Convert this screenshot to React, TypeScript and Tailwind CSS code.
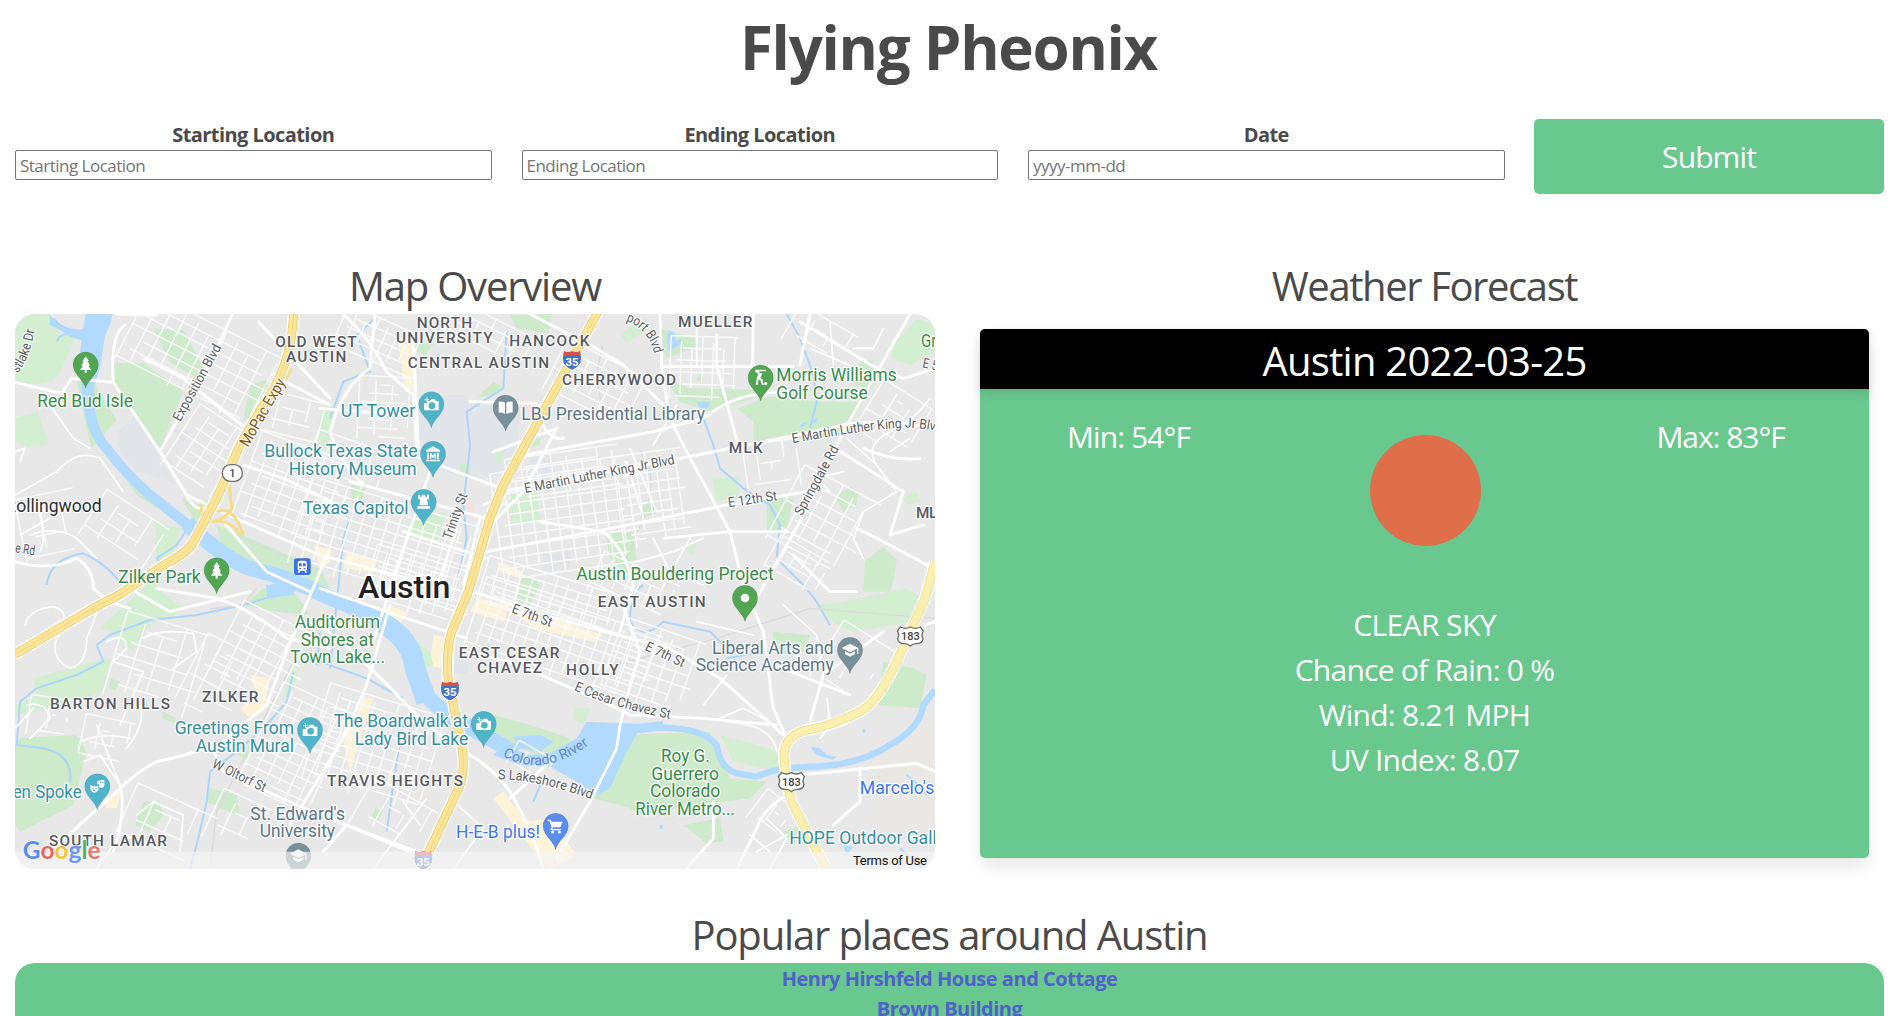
import React from "react";

/* ---------- Map data (map units: 3 per CSS pixel) ---------- */

type District = [x: number, y: number, w: number, h: number, rot: number, sx: number, sy: number];

const districts: District[] = [
  [570, 165, 460, 230, 27, 44, 36],
  [590, 440, 190, 220, 33, 44, 34],
  [850, 560, 300, 280, 20, 38, 32],
  [850, 340, 200, 130, 14, 46, 40],
  [1120, 720, 520, 270, 17, 36, 31],
  [1230, 850, 320, 180, 17, 36, 31],
  [1130, 310, 170, 190, 3, 50, 26],
  [1110, 110, 260, 130, 24, 34, 32],
  [1440, 90, 260, 100, 27, 42, 30],
  [1760, 240, 280, 170, 27, 44, 32],
  [1680, 640, 440, 330, -8, 37, 32],
  [1660, 500, 340, 120, -8, 46, 30],
  [1930, 570, 200, 260, -8, 30, 30],
  [2080, 190, 200, 190, 2, 32, 36],
  [2290, 480, 170, 140, -8, 40, 60],
  [2440, 650, 260, 250, 28, 44, 40],
  [2430, 100, 200, 120, 30, 60, 44],
  [2650, 340, 170, 170, 32, 56, 34],
  [2360, 780, 170, 110, 30, 34, 34],
  [1660, 1010, 560, 220, 19, 34, 34],
  [1620, 880, 420, 140, 17, 36, 28],
  [1870, 850, 250, 130, 25, 34, 34],
  [1930, 1080, 260, 220, 19, 40, 36],
  [1090, 1330, 360, 300, 17, 36, 34],
  [860, 1330, 240, 330, 25, 38, 30],
  [760, 1060, 260, 260, 27, 44, 34],
  [620, 1120, 170, 220, 27, 52, 44],
  [440, 1080, 260, 260, 17, 62, 44],
  [340, 680, 220, 160, 33, 54, 42],
  [120, 660, 180, 190, -12, 66, 60],
  [140, 1240, 170, 120, 8, 58, 52],
  [290, 1300, 150, 120, 12, 46, 40],
  [470, 1560, 260, 160, 24, 66, 52],
  [1150, 1540, 220, 160, 30, 66, 56],
  [1560, 1370, 120, 80, 30, 40, 34],
  [2300, 1540, 150, 110, 38, 50, 44],
  [2530, 1080, 190, 200, 32, 80, 90],
  [690, 1560, 180, 160, 25, 50, 54],
  [1010, 470, 220, 130, 19, 44, 38],
];

const greens = [
  "15,27 120,27 150,90 200,90 150,200 130,225 70,240 15,225",
  "305,175 400,175 480,230 520,260 450,430 370,330 305,230",
  "200,225 250,230 320,345 245,430 220,330",
  "15,340 85,320 115,420 60,425 15,410",
  "430,70 520,75 580,190 560,220 480,170",
  "720,240 770,225 780,280 700,350",
  "945,300 965,300 965,460 920,400",
  "515,580 560,600 640,560 610,640 560,660",
  "350,530 400,560 480,610 440,610 380,570",
  "435,655 510,670 490,760 410,840 270,970 320,980 480,940 520,910 440,850",
  "620,660 720,700 930,790 960,850 900,845 760,800 640,740",
  "700,900 760,850 860,870 900,930 800,920",
  "70,1120 250,1070 300,1060 280,1160 140,1210 15,1230 15,1200 80,1170",
  "300,1120 330,1130 315,1155 295,1150",
  "30,1300 200,1290 230,1340 190,1500 30,1580 15,1560 15,1320",
  "300,980 410,920 480,910 400,980 370,1040",
  "400,1490 450,1490 460,1530 420,1580 375,1560",
  "600,1450 680,1470 690,1535 590,1490",
  "835,1110 870,1090 850,1150 815,1190",
  "460,1220 500,1240 490,1255 455,1240",
  "675,1345 720,1340 710,1365",
  "1210,635 1310,620 1280,715 1195,690",
  "1500,30 1625,27 1615,85 1520,70",
  "1405,275 1450,230 1480,250 1430,275",
  "1495,570 1580,560 1590,645 1505,655",
  "1215,120 1270,110 1250,150 1220,140",
  "1020,540 1070,545 1050,590 1025,575",
  "1455,440 1480,440 1475,475 1452,470",
  "1350,480 1385,475 1375,510 1350,512",
  "1565,370 1590,400 1590,420 1550,430",
  "935,310 960,320 955,400 930,420 925,370",
  "1785,675 1870,690 1860,810 1800,760",
  "1950,70 2055,100 2060,125 1970,160 1960,140",
  "1830,90 1880,50 1900,80 1850,115",
  "1965,220 2040,250 2240,255 2230,280 2100,320 2010,290",
  "2180,310 2280,275 2440,290 2560,290 2500,390 2230,415 2230,350",
  "2650,120 2720,40 2775,60 2775,140 2700,180 2645,160",
  "2550,170 2590,165 2590,250 2530,240",
  "2060,225 2075,200 2075,230",
  "2105,520 2190,515 2185,570 2120,590",
  "2270,580 2350,580 2330,680 2270,675",
  "2475,575 2520,545 2545,560 2540,600 2500,620",
  "2675,580 2720,560 2730,590 2690,600",
  "2565,770 2620,725 2660,765 2650,830 2640,860 2560,860",
  "1900,600 1935,585 1940,625 1890,640",
  "2020,720 2065,710 2045,750",
  "1540,800 1590,840 1550,920 1520,900 1525,850",
  "1830,690 1870,680 1880,770 1830,760",
  "2480,960 2420,900 2500,890 2690,850 2760,900 2700,950 2530,980",
  "2620,1070 2710,1090 2750,1110 2730,1210 2600,1200",
  "1450,1230 1560,1260 1680,1300 1660,1340 1580,1350 1500,1320 1430,1290",
  "1200,990 1260,1040 1270,1080 1230,1100",
  "1280,1170 1380,1250 1340,1230",
  "1830,1290 2100,1280 2130,1370 2160,1420 2270,1430 2220,1480 2050,1500 1890,1530 1860,1510 1750,1480 1820,1400",
  "2130,1290 2310,1340 2310,1400 2170,1370",
  "2020,1560 2130,1540 2140,1610 2090,1615",
  "2320,1580 2370,1560 2350,1620",
  "1690,1210 1740,1210 1720,1260 1690,1240",
  "1095,1510 1120,1515 1105,1550 1085,1540",
  "2290,980 2400,990 2380,1040 2330,1050 2290,1010",
];

const blocks = [
  "1230,270 1360,270 1400,340 1400,520 1300,500 1225,400",
  "1400,300 1530,310 1520,480 1430,520 1390,490",
  "1560,450 1620,440 1640,510 1570,545",
  "320,380 375,335 500,540 450,520 380,500 330,440",
  "1600,745 1680,740 1680,790 1600,800",
  "485,370 540,380 520,410",
  "600,690 700,680 710,740 660,750",
  "1340,1050 1380,1070 1370,1110 1330,1100",
];

const sand = [
  "1165,110 1210,100 1215,270 1185,260",
  "1010,740 1100,770 1080,800 1000,790",
  "1400,880 1500,900 1480,950 1380,920",
  "1270,990 1320,1000 1290,1090 1260,1080",
  "1510,920 1660,950 1780,990 1750,1010 1570,970",
  "720,1110 780,1120 760,1220 720,1240 690,1210 740,1170",
  "280,1480 335,1450 320,1510 290,1510",
  "1000,1310 1060,1180 1090,1180 1020,1400",
  "1450,1480 1480,1460 1570,1580 1600,1630 1640,1640 1620,1692 1580,1650",
  "1550,1550 1620,1540 1700,1650 1620,1692 1580,1640",
  "1130,900 1190,920 1160,980 1120,950",
  "910,720 965,735 960,770 930,790",
  "1465,770 1540,800 1530,820 1470,800",
];

const midRoads = [
  "M15 232 L155 265 L185 220 L310 232 L450 440 L530 570 L700 650 L930 750 L1230 830",
  "M320 27 L440 30 M345 60 Q300 90 310 232",
  "M668 27 L610 150 L450 440",
  "M400 160 L520 220 L710 370 M540 240 L720 380",
  "M745 50 L960 280 M790 210 L960 300",
  "M15 770 Q120 800 200 760 Q250 790 250 850 Q300 900 360 910",
  "M340 840 L480 920 L560 900 L720 860 M440 850 L620 880 Q720 910 830 1000 L960 1030",
  "M640 650 L700 720 L770 800 L900 860",
  "M530 570 Q560 640 620 590",
  "M955 740 L830 1040 L770 1200 L640 1310 Q560 1345 440 1370 Q380 1400 320 1460 L120 1640",
  "M330 1440 Q350 1520 310 1640",
  "M600 1320 L640 1400 L860 1500 L960 1540 L1200 1640",
  "M965 590 L820 520 L700 480",
  "M930 310 L1180 330 M1000 27 Q1080 100 1130 200 L1210 270 L1220 430",
  "M1095 27 L1080 190 Q1000 240 960 380 Q990 470 1060 540",
  "M1210 110 L1225 430 M1180 440 L1500 560 L1420 600 M1380 290 L1580 295 Q1600 410 1660 400",
  "M1020 530 L1430 640 M1180 680 L1430 760 M1260 500 L1160 790 L1090 1010",
  "M1410 640 L1360 840 M1350 640 L1280 850",
  "M1450 440 L1640 370 L1540 560 L1420 680",
  "M1545 450 L1930 380 L2080 340 Q2170 270 2270 265 L2360 255",
  "M1500 555 L2010 460 L2360 390 L2500 360 Q2600 340 2775 370",
  "M1430 740 L1830 665 L2150 600 L2390 560",
  "M1560 27 L1740 120 L1840 180 L1960 300 L2030 440 L2160 680 L2200 840 L2260 980 L2290 1210 L2330 1300",
  "M1950 30 L1955 190 L1980 350",
  "M2120 90 L2120 180 L2160 330 L2190 440",
  "M2700 27 L2500 380 L2370 650 L2240 880 M1960 185 L2350 185 M2230 27 L2228 185",
  "M2370 50 L2600 190 L2680 220 L2775 190 M2400 27 L2370 180",
  "M1780 680 Q1850 740 1870 840 L1830 980 M1590 650 L1780 680",
  "M1390 860 L1600 930 L1860 1000 L1960 1020 L2130 1120 L2320 1290",
  "M1360 1040 L1500 1070 L1800 1200 L1860 1230 L2080 1240 L2300 1260",
  "M1830 880 L1890 1040 L1850 1180 L1830 1260 L1820 1330 L1740 1490 L1640 1660",
  "M930 850 L1130 920 L1370 1000",
  "M930 960 Q1050 1050 1190 1200 Q1290 1300 1380 1350 Q1450 1390 1500 1460 L1560 1570 L1600 1692",
  "M1140 900 L1070 1140 L1000 1300 L840 1560",
  "M940 1640 L1010 1560 L1140 1610 L1250 1650",
  "M2370 1410 L2720 1375 L2775 1400 M2550 1390 L2550 1490 L2470 1560",
  "M2330 1470 Q2260 1510 2240 1570 L2180 1692 M2110 1490 L2110 1600 L2030 1690",
  "M1500 1480 L1620 1370 M2780 950 L2740 960",
  "M2330 680 L2160 680 L1960 700 M2560 430 Q2650 470 2730 460",
  "M2460 420 L2680 560 L2640 690 L2740 660",
  "M2350 750 L2460 860 L2540 860 M2540 670 L2600 700 L2770 790",
  "M2290 1080 L2520 1170 M2400 1250 L2440 1110 L2620 980",
];

const thinRoads = [
  "M15 440 L45 430 L30 470 M120 300 L190 400 L240 430 M15 570 L140 500 Q200 430 270 460 L340 560",
  "M60 690 Q140 660 200 700 L260 760 M90 620 Q110 700 90 740 M30 690 L120 640",
  "M45 960 Q60 910 130 905 Q190 920 140 1000 Q120 1060 180 1090 Q230 1080 230 1000 Q250 960 260 920",
  "M290 1010 Q350 980 350 1030 L310 1070 L400 1100 L330 1260 M400 1000 Q440 970 550 985 L560 1040 L490 1090",
  "M50 1200 Q110 1190 120 1240 L60 1300 M15 1270 L70 1210 M220 1370 L270 1350 L330 1440",
  "M260 1260 L330 1440 M210 1310 Q280 1280 360 1300 M380 1180 Q420 1240 350 1330",
  "M380 1530 L430 1490 L520 1530 L510 1640 M260 1692 L330 1590 L440 1620",
  "M1320 1480 L1420 1570 L1330 1692 M1180 1490 L1230 1560 M1250 1480 L1090 1692",
  "M2060 27 L2060 180 M2400 130 L2540 190 M2460 50 L2470 180 M2530 130 L2590 130 L2620 70",
  "M2510 400 L2600 480 L2660 560 L2560 620 L2530 700 L2560 760 M2500 500 L2420 520 L2460 560",
  "M2600 480 Q2560 420 2640 380 Q2720 340 2760 280 M2700 400 L2640 440",
  "M2060 950 L2230 990 M2320 900 L2420 990 L2440 1110 M2450 1180 Q2470 1260 2430 1300",
  "M2270 1540 L2330 1600 L2280 1692 M2240 1640 L2330 1590 M2220 1590 L2280 1640",
  "M2130 1240 L2200 1210 L2280 1250 M2080 1200 L2150 1110 M2150 1250 Q2290 1260 2300 1340",
  "M1850 470 L1900 640 M1860 430 L1940 620 M2000 300 L1930 420",
  "M1930 700 L1980 800 L2080 840 M1880 770 L1990 740 L2080 700 M1960 840 L2040 700",
];

const streams = [
  "M130 40 Q150 70 190 75 L240 80 M140 110 Q150 80 190 90",
  "M540 660 L500 720 L440 760 L470 790",
  "M110 840 Q120 760 220 745 Q300 780 350 860",
  "M900 840 L700 900 L560 930 L420 945 L300 990 L260 1020 L280 1070 L200 1110 L80 1150 L30 1190 L20 1320 L100 1330 Q190 1350 180 1430",
  "M1095 40 L1040 90 L1080 200 L1000 230 L960 340",
  "M1490 80 L1480 250 L1370 320 L1380 420 L1360 600 L1370 700 L1340 840",
  "M2330 27 L2370 100 L2410 210 L2420 290 L2400 370",
  "M2080 340 L2110 420 L2130 490 L2200 550 L2280 600 L2310 660 L2300 760 L2380 840 L2420 890 L2460 960",
  "M960 1090 L1000 700 L1020 640",
  "M850 1100 L830 1190 L770 1260 L680 1340 L600 1400 L590 1490 L560 1620 L540 1692",
  "M930 980 L920 1080 M1130 1580 L1160 1370 L1180 1260 M930 1070 L1070 1120 L1180 1180",
  "M1900 840 Q1860 860 1860 950 Q1900 1010 1960 950 L2100 980 L2160 1040",
  "M2150 1060 L2320 1030 M1600 1420 L1570 1490",
  "M2690 1410 Q2730 1440 2750 1470 M2670 1630 L2740 1692",
];

type MapText = [x: number, y: number, w: number, text: string];

const placeLabels: { color: string; items: MapText[] }[] = [
  {
    color: "#378d48",
    items: [
      [82, 307, 287, "Red Bud Isle"],
      [325, 834, 247, "Zilker Park"],
      [2733, 125, 46, "Gr"],
      [2299, 229, 361, "Morris Williams"],
      [2299, 281, 274, "Golf Course"],
      [1699, 826, 592, "Austin Bouldering Project"],
      [854, 970, 256, "Auditorium"],
      [872, 1022, 220, "Shores at"],
      [841, 1075, 284, "Town Lake..."],
      [1953, 1372, 146, "Roy G."],
      [1924, 1424, 203, "Guerrero"],
      [1920, 1476, 211, "Colorado"],
      [1876, 1529, 299, "River Metro..."],
    ],
  },
  {
    color: "#34909f",
    items: [
      [992, 335, 224, "UT Tower"],
      [763, 457, 460, "Bullock Texas State"],
      [836, 510, 384, "History Museum"],
      [878, 627, 318, "Texas Capitol"],
      [494, 1287, 358, "Greetings From"],
      [557, 1340, 295, "Austin Mural"],
      [8, 1480, 207, "en Spoke"],
      [971, 1267, 403, "The Boardwalk at"],
      [1034, 1319, 341, "Lady Bird Lake"],
      [2338, 1618, 442, "HOPE Outdoor Gall"],
    ],
  },
  {
    color: "#5b7686",
    items: [
      [1534, 345, 551, "LBJ Presidential Library"],
      [2106, 1046, 365, "Liberal Arts and"],
      [2057, 1098, 414, "Science Academy"],
      [721, 1545, 284, "St. Edward's"],
      [749, 1597, 226, "University"],
    ],
  },
  {
    color: "#4079f2",
    items: [
      [1338, 1599, 252, "H-E-B plus!"],
      [2549, 1468, 224, "Marcelo's"],
    ],
  },
  { color: "#2b2f33", items: [[-14, 620, 289, "Rollingwood"]] },
];

const areaLabels: MapText[] = [
  [796, 125, 244, "OLD WEST"],
  [828, 170, 181, "AUSTIN"],
  [1220, 68, 166, "NORTH"],
  [1158, 113, 290, "UNIVERSITY"],
  [1498, 122, 240, "HANCOCK"],
  [1193, 188, 424, "CENTRAL AUSTIN"],
  [1656, 241, 342, "CHERRYWOOD"],
  [2004, 67, 223, "MUELLER"],
  [2156, 444, 102, "MLK"],
  [2718, 640, 64, "ML"],
  [1346, 1060, 302, "EAST CESAR"],
  [1401, 1104, 195, "CHAVEZ"],
  [1668, 1111, 158, "HOLLY"],
  [1763, 907, 324, "EAST AUSTIN"],
  [576, 1190, 169, "ZILKER"],
  [120, 1213, 360, "BARTON HILLS"],
  [951, 1443, 408, "TRAVIS HEIGHTS"],
  [117, 1622, 354, "SOUTH LAMAR"],
];

const roadLabels: { d: string; w: number; text: string; color?: string }[] = [
  { d: "M511 352 L658 85", w: 257, text: "Exposition Blvd" },
  { d: "M714 428 L856 182", w: 227, text: "MoPac Expy", color: "#7c551b" },
  { d: "M22 205 Q70 150 80 20", w: 142, text: "stlake Dr" },
  { d: "M14 742 L110 756", w: 60, text: "e Rd" },
  { d: "M1324 706 L1398 500", w: 145, text: "Trinity St" },
  { d: "M1546 564 L2050 466", w: 458, text: "E Martin Luther King Jr Blvd" },
  { d: "M2348 415 Q2560 374 2680 368 Q2740 366 2830 390", w: 452, text: "E Martin Luther King Jr Blvd" },
  { d: "M2156 607 L2350 578", w: 148, text: "E 12th St" },
  { d: "M2376 634 L2514 382", w: 232, text: "Springdale Rd" },
  { d: "M1848 48 Q1930 74 1940 190", w: 136, text: "port Blvd" },
  { d: "M2736 187 L2800 200", w: 46, text: "E 5" },
  { d: "M1503 922 L1680 988", w: 126, text: "E 7th St" },
  { d: "M1903 1034 L2078 1116", w: 126, text: "E 7th St" },
  { d: "M1691 1155 Q1850 1225 2060 1254", w: 302, text: "E Cesar Chavez St" },
  { d: "M1464 1423 Q1590 1420 1800 1504", w: 288, text: "S Lakeshore Blvd" },
  { d: "M604 1386 L840 1500", w: 174, text: "W Oltorf St" },
];

/* ---------- Map pieces ---------- */

function DistrictGrid({ d }: { d: District }) {
  const [x, y, w, h, rot, sx, sy] = d;
  const parts: string[] = [];
  const cols = Math.floor(w / sx);
  const rows = Math.floor(h / sy);
  for (let i = 0; i <= cols; i++) {
    const a = ((i * 7) % 3) * sy * 0.5;
    const b = ((i * 5) % 4) * sy * 0.5;
    parts.push(`M${-w / 2 + i * sx} ${-h / 2 + a}V${h / 2 - b}`);
  }
  for (let j = 0; j <= rows; j++) {
    const a = ((j * 5) % 3) * sx * 0.6;
    const b = ((j * 7) % 4) * sx * 0.5;
    parts.push(`M${-w / 2 + a} ${-h / 2 + j * sy}H${w / 2 - b}`);
  }
  return <path transform={`translate(${x} ${y}) rotate(${rot})`} d={parts.join("")} />;
}

function Highway({ d, light }: { d: string; light?: boolean }) {
  return (
    <g fill="none" strokeLinejoin="round">
      <path d={d} stroke="#fff" strokeWidth="36" />
      <path d={d} stroke={light ? "#f3dc8b" : "#edca6c"} strokeWidth="27" />
      <path d={d} stroke={light ? "#fcf0b0" : "#fae59a"} strokeWidth="22" />
      {!light && <path d={d} stroke="#f3d67f" strokeWidth="3" />}
    </g>
  );
}

function Pin({ x, y, color, children }: { x: number; y: number; color: string; children: React.ReactNode }) {
  return (
    <g transform={`translate(${x} ${y})`}>
      <path
        d="M0 0 C-7 -28 -38 -42 -38 -71 A38 38 0 1 1 38 -71 C38 -42 7 -28 0 0Z"
        fill={color}
        stroke="#000"
        strokeOpacity=".12"
        strokeWidth="2"
      />
      <g transform="translate(0 -71)" fill="#fff">
        {children}
      </g>
    </g>
  );
}

const Tree = () => <path d="M0 -25 L10 -10 H6 L13 3 H8 L17 16 H3 V25 H-3 V16 H-17 L-8 3 H-13 L-6 -10 H-10Z" />;
const Camera = ({ color }: { color: string }) => (
  <g>
    <path d="M-22 -3 H-12 V-10 H-5 L0 -16 H10 L14 -10 H22 V18 H-22Z" />
    <path d="M-20 -15 H-15 V-20 H-12 V-15 H-7 V-12 H-12 V-7 H-15 V-12 H-20Z" />
    <circle cx="2" cy="4" r="10" fill={color} />
  </g>
);
const GradCap = () => (
  <g>
    <path d="M0 -19 L25 -6 L0 7 L-25 -6Z" />
    <path d="M-15 3 L0 11 L15 3 V12 L0 20 L-15 12Z" />
    <path d="M21 -6 H25 V12 H21Z" />
  </g>
);

function Interstate({ x, y }: { x: number; y: number }) {
  return (
    <g transform={`translate(${x} ${y})`}>
      <path d="M-24 -28 Q-12 -22 0 -28 Q12 -22 24 -28 Q32 -10 27 4 Q20 20 0 28 Q-20 20 -27 4 Q-32 -10 -24 -28Z" fill="#4573c4" stroke="#fff" strokeWidth="3" />
      <path d="M-24 -30 Q-12 -24 0 -30 Q12 -24 24 -30 L27 -17 H-27Z" fill="#d6504c" />
      <text y="14" textAnchor="middle" fontSize="34" fontWeight="700" fill="#fff">35</text>
    </g>
  );
}

function UsRoute({ x, y }: { x: number; y: number }) {
  return (
    <g transform={`translate(${x} ${y})`}>
      <path d="M-30 -28 Q-15 -20 0 -28 Q15 -20 30 -28 L39 -16 Q32 -4 38 8 Q36 22 18 22 Q6 22 0 29 Q-6 22 -18 22 Q-36 22 -38 8 Q-32 -4 -39 -16Z" fill="#fff" stroke="#6a6a6a" strokeWidth="4" />
      <text y="12" textAnchor="middle" fontSize="33" fontWeight="500" fill="#444">183</text>
    </g>
  );
}

function AustinMap() {
  const teal = "#4fb3ca";
  const green = "#52a552";
  const slate = "#78909c";
  return (
    <svg viewBox="15 27 2760 1665" className="block h-[555px] w-full rounded-[20px] font-['Roboto',sans-serif]" role="img" aria-label="Map of Austin">
      <rect x="15" y="27" width="2760" height="1665" fill="#e8e8e8" />
      <path d="M2600 1340 L2775 1250 V1600 L2600 1560Z" fill="#eae8e4" />
      {blocks.map((p) => <polygon key={p} points={p} fill="#e1e5e9" />)}
      {sand.map((p) => <polygon key={p} points={p} fill="#fdf3d8" />)}
      {greens.map((p, i) => <polygon key={p} points={p} fill={i % 3 ? "#cdeacb" : "#d3eed0"} />)}
      <polygon points="1530,280 1600,305 1580,330 1538,320" fill="#f8dfdf" />
      <polygon points="1375,590 1392,595 1385,635 1370,630" fill="#f8dfdf" />

      <g fill="none" stroke="#acd5fb" strokeWidth="6" strokeLinejoin="round">
        {streams.map((d) => <path key={d} d={d} />)}
      </g>
      <g fill="#b2daff">
        <path d="M228 27 H308 L300 60 L285 90 L272 180 L252 245 L255 320 L225 330 L215 250 L210 150 L215 90Z" />
        <path d="M120 30 L150 65 L205 80 L230 65 V110 L180 95 L150 75 L120 60Z" />
        <path d="M1975 75 L1995 85 L1995 110 L2015 100 L2010 120 L1975 138 L1972 100Z" />
        <path d="M2060 290 L2100 290 L2095 310 L2070 310Z M2370 360 L2395 348 L2385 362 L2372 368Z M2400 350 L2425 335 L2420 352Z" />
        <path d="M1510 1295 L1590 1290 L1630 1310 L1590 1340 L1530 1330Z" />
        <path d="M1480 1320 L1560 1350 L1620 1345 L1700 1300 L1730 1250 L1890 1270 L1850 1340 L1800 1450 L1760 1470 L1700 1430 L1620 1385 L1530 1380 L1450 1350Z" />
        <path d="M2400 1325 L2430 1330 L2450 1350 L2480 1355 L2470 1365 L2420 1350Z M2558 1273 h8 v10 h-8Z M1950 1560 h8 v12 h-8Z" />
        <path d="M2500 1620 L2530 1625 L2510 1650Z" />
      </g>
      <g fill="none" stroke="#b2daff" strokeLinejoin="round">
        <path d="M238 310 Q250 390 290 430 Q350 510 420 570 L540 665" strokeWidth="31" />
        <path d="M530 655 Q640 760 720 790 Q850 820 940 870 Q1060 920 1140 960 Q1200 1000 1212 1100 Q1235 1180 1330 1240 L1430 1295 L1520 1345" strokeWidth="46" />
        <path d="M1110 950 Q1205 1000 1215 1090 L1250 1190" strokeWidth="62" />
        <path d="M770 860 L850 850" strokeWidth="40" />
        <path d="M1830 1272 L1960 1268 Q2080 1270 2120 1320 Q2130 1390 2180 1405 L2240 1415 Q2290 1390 2390 1386 Q2540 1385 2640 1320 Q2730 1270 2740 1200 L2775 1155" strokeWidth="19" />
        <path d="M1740 1265 L1890 1270 L1960 1262" strokeWidth="28" />
      </g>

      <g fill="none" stroke="#dadada" strokeWidth="4">
        <path d="M1890 440 Q1950 500 1900 640 L1840 780 M1780 120 Q1740 240 1790 320" />
        <path d="M860 1050 L620 1520 L600 1692 M600 912 L700 900 L740 850 M1810 1080 L2120 1000 L2400 910 L2775 940" />
        <path d="M660 680 Q780 740 940 800" />
      </g>
      <g fill="none" stroke="#f9f9f9" strokeWidth="4.5">
        {districts.map((d, i) => <DistrictGrid key={i} d={d} />)}
      </g>
      <g fill="none" stroke="#fff" strokeWidth="5" strokeLinejoin="round" strokeLinecap="round">
        {thinRoads.map((d) => <path key={d} d={d} />)}
      </g>
      <g fill="none" stroke="#fff" strokeWidth="8.5" strokeLinejoin="round" strokeLinecap="round">
        {midRoads.map((d) => <path key={d} d={d} />)}
      </g>

      <g fill="none" stroke="#f6dc8a" strokeWidth="9">
        <path d="M600 650 Q660 640 690 690 M620 620 Q670 600 700 690 M655 520 L665 610 M575 600 L570 650 M590 650 Q650 650 670 600" />
        <path d="M845 190 L825 225 M790 235 L780 270" />
      </g>
      <Highway d="M2775 770 L2745 880 L2660 1070 Q2600 1200 2540 1225 Q2460 1265 2390 1275 Q2325 1290 2322 1350 L2328 1430 L2345 1490 L2400 1600 L2450 1692" light />
      <Highway d="M852 20 L845 90 Q830 200 760 300 L690 420 L620 580 L545 720 Q520 750 470 775 L330 868 L240 915 L15 1048" />
      <Highway d="M1764 20 L1480 540 L1440 640 L1375 860 L1325 980 Q1308 1030 1314 1120 L1358 1340 Q1364 1400 1350 1440 L1245 1665" />

      <g transform="translate(667 504)">
        <rect x="-30" y="-25" width="60" height="50" rx="24" fill="#fff" stroke="#707070" strokeWidth="4" />
        <text y="12" textAnchor="middle" fontSize="33" fontWeight="500" fill="#444">1</text>
      </g>
      <Interstate x={1686} y={168} />
      <Interstate x={1320} y={1160} />
      <Interstate x={1240} y={1668} />
      <UsRoute x={2701} y={994} />
      <UsRoute x={2344} y={1431} />
      <g transform="translate(877 785)">
        <rect x="-25" y="-25" width="50" height="50" rx="8" fill="#3b71e3" />
        <path d="M-14 -10 Q-14 -18 -6 -18 H6 Q14 -18 14 -10 V8 Q14 11 10 11 L15 18 H9 L6 13 H-6 L-9 18 H-15 L-10 11 Q-14 11 -14 8Z" fill="#fff" />
        <path d="M-10 -10 H-2 V-1 H-10Z M2 -10 H10 V-1 H2Z M-9 4 h5 v4 h-5Z M4 4 h5 v4 h-5Z" fill="#3b71e3" />
      </g>

      <g fontSize="38" fontWeight="400" stroke="#fff" strokeOpacity=".85" strokeWidth="7" strokeLinejoin="round" style={{ paintOrder: "stroke" }}>
        {roadLabels.map((r, i) => (
          <g key={i} fill={r.color ?? "#5c6064"}>
            <path id={`road-${i}`} d={r.d} fill="none" stroke="none" />
            <text fontSize={r.color ? 46 : 41}>
              <textPath href={`#road-${i}`} textLength={r.w} lengthAdjust="spacingAndGlyphs">{r.text}</textPath>
            </text>
          </g>
        ))}
      </g>
      <path id="river-label" d="M1478 1352 Q1600 1424 1745 1312" fill="none" />
      <text fontSize="42" fill="#6089cd">
        <textPath href="#river-label" textLength="278">Colorado River</textPath>
      </text>

      <g fontSize="46" fontWeight="500" fill="#56595e" stroke="#fff" strokeOpacity=".9" strokeWidth="7" strokeLinejoin="round" style={{ paintOrder: "stroke" }}>
        {areaLabels.map(([x, y, w, t]) => (
          <text key={t + x} x={x} y={y} textLength={w}>{t}</text>
        ))}
      </g>
      {placeLabels.map((g) => (
        <g key={g.color} fontSize="54" fill={g.color} stroke="#fff" strokeOpacity=".95" strokeWidth="8" strokeLinejoin="round" style={{ paintOrder: "stroke" }}>
          {g.items.map(([x, y, w, t]) => (
            <text key={t} x={x} y={y} textLength={w} lengthAdjust="spacingAndGlyphs">{t}</text>
          ))}
        </g>
      ))}
      <text x="1044" y="880" textLength="277" lengthAdjust="spacingAndGlyphs" fontSize="96" fontWeight="500" fill="#1f2124" stroke="#fff" strokeWidth="10" style={{ paintOrder: "stroke" }}>Austin</text>

      <Pin x={227} y={250} color={green}><Tree /></Pin>
      <Pin x={620} y={867} color={green}><Tree /></Pin>
      <Pin x={2252} y={289} color={green}>
        <path d="M-16 -24 H16 V-19 H-4 V-15 L5 -12 L-1 0 L6 6 L9 22 H4 L0 10 L-6 5 L-9 22 H-15 L-11 -1 L-7 -12 L-16 -17Z" />
        <circle cx="15" cy="18" r="5" />
      </Pin>
      <Pin x={2205} y={950} color={green}><circle r="13" /></Pin>
      <Pin x={1264} y={369} color={teal}><Camera color={teal} /></Pin>
      <Pin x={1269} y={518} color={teal}>
        <path d="M0 -23 L21 -11 V-7 H-21 V-11Z M-18 -4 H-12 V15 H-18Z M12 -4 H18 V15 H12Z M-21 17 H21 V22 H-21Z" />
        <path d="M-9 14 V-2 H-5 L0 6 L5 -2 H9 V14 H5 V6 L0 13 L-5 6 V14Z" />
      </Pin>
      <Pin x={1241} y={662} color={teal}>
        <path d="M-16 -22 H-10 V-16 H-4 V-22 H4 V-16 H10 V-22 H16 V-8 H10 L13 10 H-13 L-10 -8 H-16Z M-19 13 H19 V20 H-19Z" />
      </Pin>
      <Pin x={900} y={1346} color={teal}><Camera color={teal} /></Pin>
      <Pin x={1421} y={1328} color={teal}><Camera color={teal} /></Pin>
      <Pin x={262} y={1515} color={teal}>
        <path d="M0 -16 L21 -20 V-2 Q16 8 6 4 V-6 H0Z" />
        <path d="M-21 -4 Q-9 2 3 -2 V10 Q-3 20 -10 19 Q-20 16 -21 6Z" />
        <path d="M-15 4 h5 v3 h-5Z M-6 4 h5 v3 h-5Z M7 -12 h4 v3 h-4Z M14 -13 h4 v3 h-4Z M-13 11 h8 v3 h-8Z" fill={teal} />
      </Pin>
      <Pin x={1487} y={379} color={slate}>
        <path d="M-2 -15 Q-10 -20 -21 -18 V15 Q-10 14 -2 19Z M2 -15 Q10 -20 21 -18 V15 Q10 14 2 19Z" />
      </Pin>
      <Pin x={2520} y={1106} color={slate}><GradCap /></Pin>
      <Pin x={865} y={1723} color={slate}><GradCap /></Pin>
      <Pin x={1637} y={1634} color="#5b8def">
        <path d="M-24 -19 H-15 L-12 -13 H21 L14 4 H-8 L-10 9 H15 V13 H-16 L-12 3 L-19 -15 H-24Z" />
        <circle cx="-9" cy="18" r="4.5" />
        <circle cx="11" cy="18" r="4.5" />
      </Pin>

      <rect x="15" y="1640" width="2760" height="52" fill="#f5f5f5" fillOpacity=".68" />
      <text x="38" y="1662" textLength="234" lengthAdjust="spacingAndGlyphs" fontSize="76" fontWeight="700" fontFamily="Lato, sans-serif" stroke="#fff" strokeOpacity=".8" strokeWidth="5" style={{ paintOrder: "stroke" }}>
        <tspan fill="#5c8df2">G</tspan>
        <tspan fill="#e8685d">o</tspan>
        <tspan fill="#f5c534">o</tspan>
        <tspan fill="#6b97f5">g</tspan>
        <tspan fill="#53b06a">l</tspan>
        <tspan fill="#eb766c">e</tspan>
      </text>
      <text x="2529" y="1679" textLength="222" fontSize="39" fill="#111">Terms of Use</text>
    </svg>
  );
}

/* ---------- Page ---------- */

function Field({ label, placeholder }: { label: string; placeholder: string }) {
  return (
    <label className="block w-[476.5px] pt-px text-center">
      <span className="block text-[20px] leading-[30px] font-bold tracking-[-0.028em]">{label}</span>
      <input
        className="block h-[30px] w-full rounded-[2px] border border-[#767676] bg-white px-1 text-[17px] tracking-[-0.03em] placeholder:text-[#757575]"
        placeholder={placeholder}
      />
    </label>
  );
}

const places = ["Henry Hirshfeld House and Cottage", "Brown Building"];

export default function App() {
  return (
    <div className="h-[1016px] overflow-hidden bg-white px-[15px] font-['Open_Sans','Noto_Sans',sans-serif] text-[#4a4a4a]">
      <h1 className="h-[119px] pt-[2px] pl-[3px] text-center text-[60px] leading-[90px] font-bold tracking-[-0.021em]">Flying Pheonix</h1>

      <form className="-mr-[5px] flex h-[136px] items-start justify-between" onSubmit={(e) => e.preventDefault()}>
        <div className="flex gap-[30px]">
          <Field label="Starting Location" placeholder="Starting Location" />
          <Field label="Ending Location" placeholder="Ending Location" />
          <Field label="Date" placeholder="yyyy-mm-dd" />
        </div>
        <button className="h-[75px] w-[350px] rounded-[5px] bg-[#69c88e] text-[30px] tracking-[-0.03em] text-white">Submit</button>
      </form>

      <main className="flex h-[650px]">
        <section className="w-[920px]">
          <h2 className="h-[59px] text-center text-[40px] leading-[62px] tracking-[-0.03em]">Map Overview</h2>
          <AustinMap />
        </section>

        <section className="ml-[45px] w-[889px]">
          <h2 className="h-[74px] text-center text-[40px] leading-[62px] tracking-[-0.035em]">Weather Forecast</h2>
          <article className="h-[529px] rounded-[5px] bg-[#69c88e] text-[30px] leading-[45px] tracking-[-0.025em] text-white shadow-[0_10px_20px_-2.5px_rgba(10,10,10,0.1),0_0_0_1px_rgba(10,10,10,0.02)]">
            <header className="h-[60px] rounded-t-[5px] bg-black text-center text-[40px] leading-[64px] shadow-[0_5px_10px_rgba(10,10,10,0.1)]">Austin 2022-03-25</header>
            <div className="flex h-[213px] justify-between pt-[25px]">
              <p className="w-[297px] text-center tracking-[-0.03em]">Min: 54°F</p>
              <span className="mt-[21px] ml-[2px] size-[111px] rounded-full bg-[#df6e4a]" />
              <p className="w-[297px] text-center tracking-[-0.035em]">Max: 83°F</p>
            </div>
            <div className="text-center">
              <p className="tracking-[-0.02em]">CLEAR SKY</p>
              <p>Chance of Rain: 0 %</p>
              <p>Wind: 8.21 MPH</p>
              <p>UV Index: 8.07</p>
            </div>
          </article>
        </section>
      </main>

      <section className="-mr-[5px] text-center">
        <h2 className="h-[58px] text-[40px] leading-[60px] tracking-[-0.029em]">Popular places around Austin</h2>
        <ul className="h-[80px] rounded-t-[20px] bg-[#69c88e] pt-px text-[20px] leading-[30px] font-bold tracking-[-0.024em] text-[#4e62c9]">
          {places.map((p) => (
            <li key={p}><a href="#">{p}</a></li>
          ))}
        </ul>
      </section>
    </div>
  );
}
